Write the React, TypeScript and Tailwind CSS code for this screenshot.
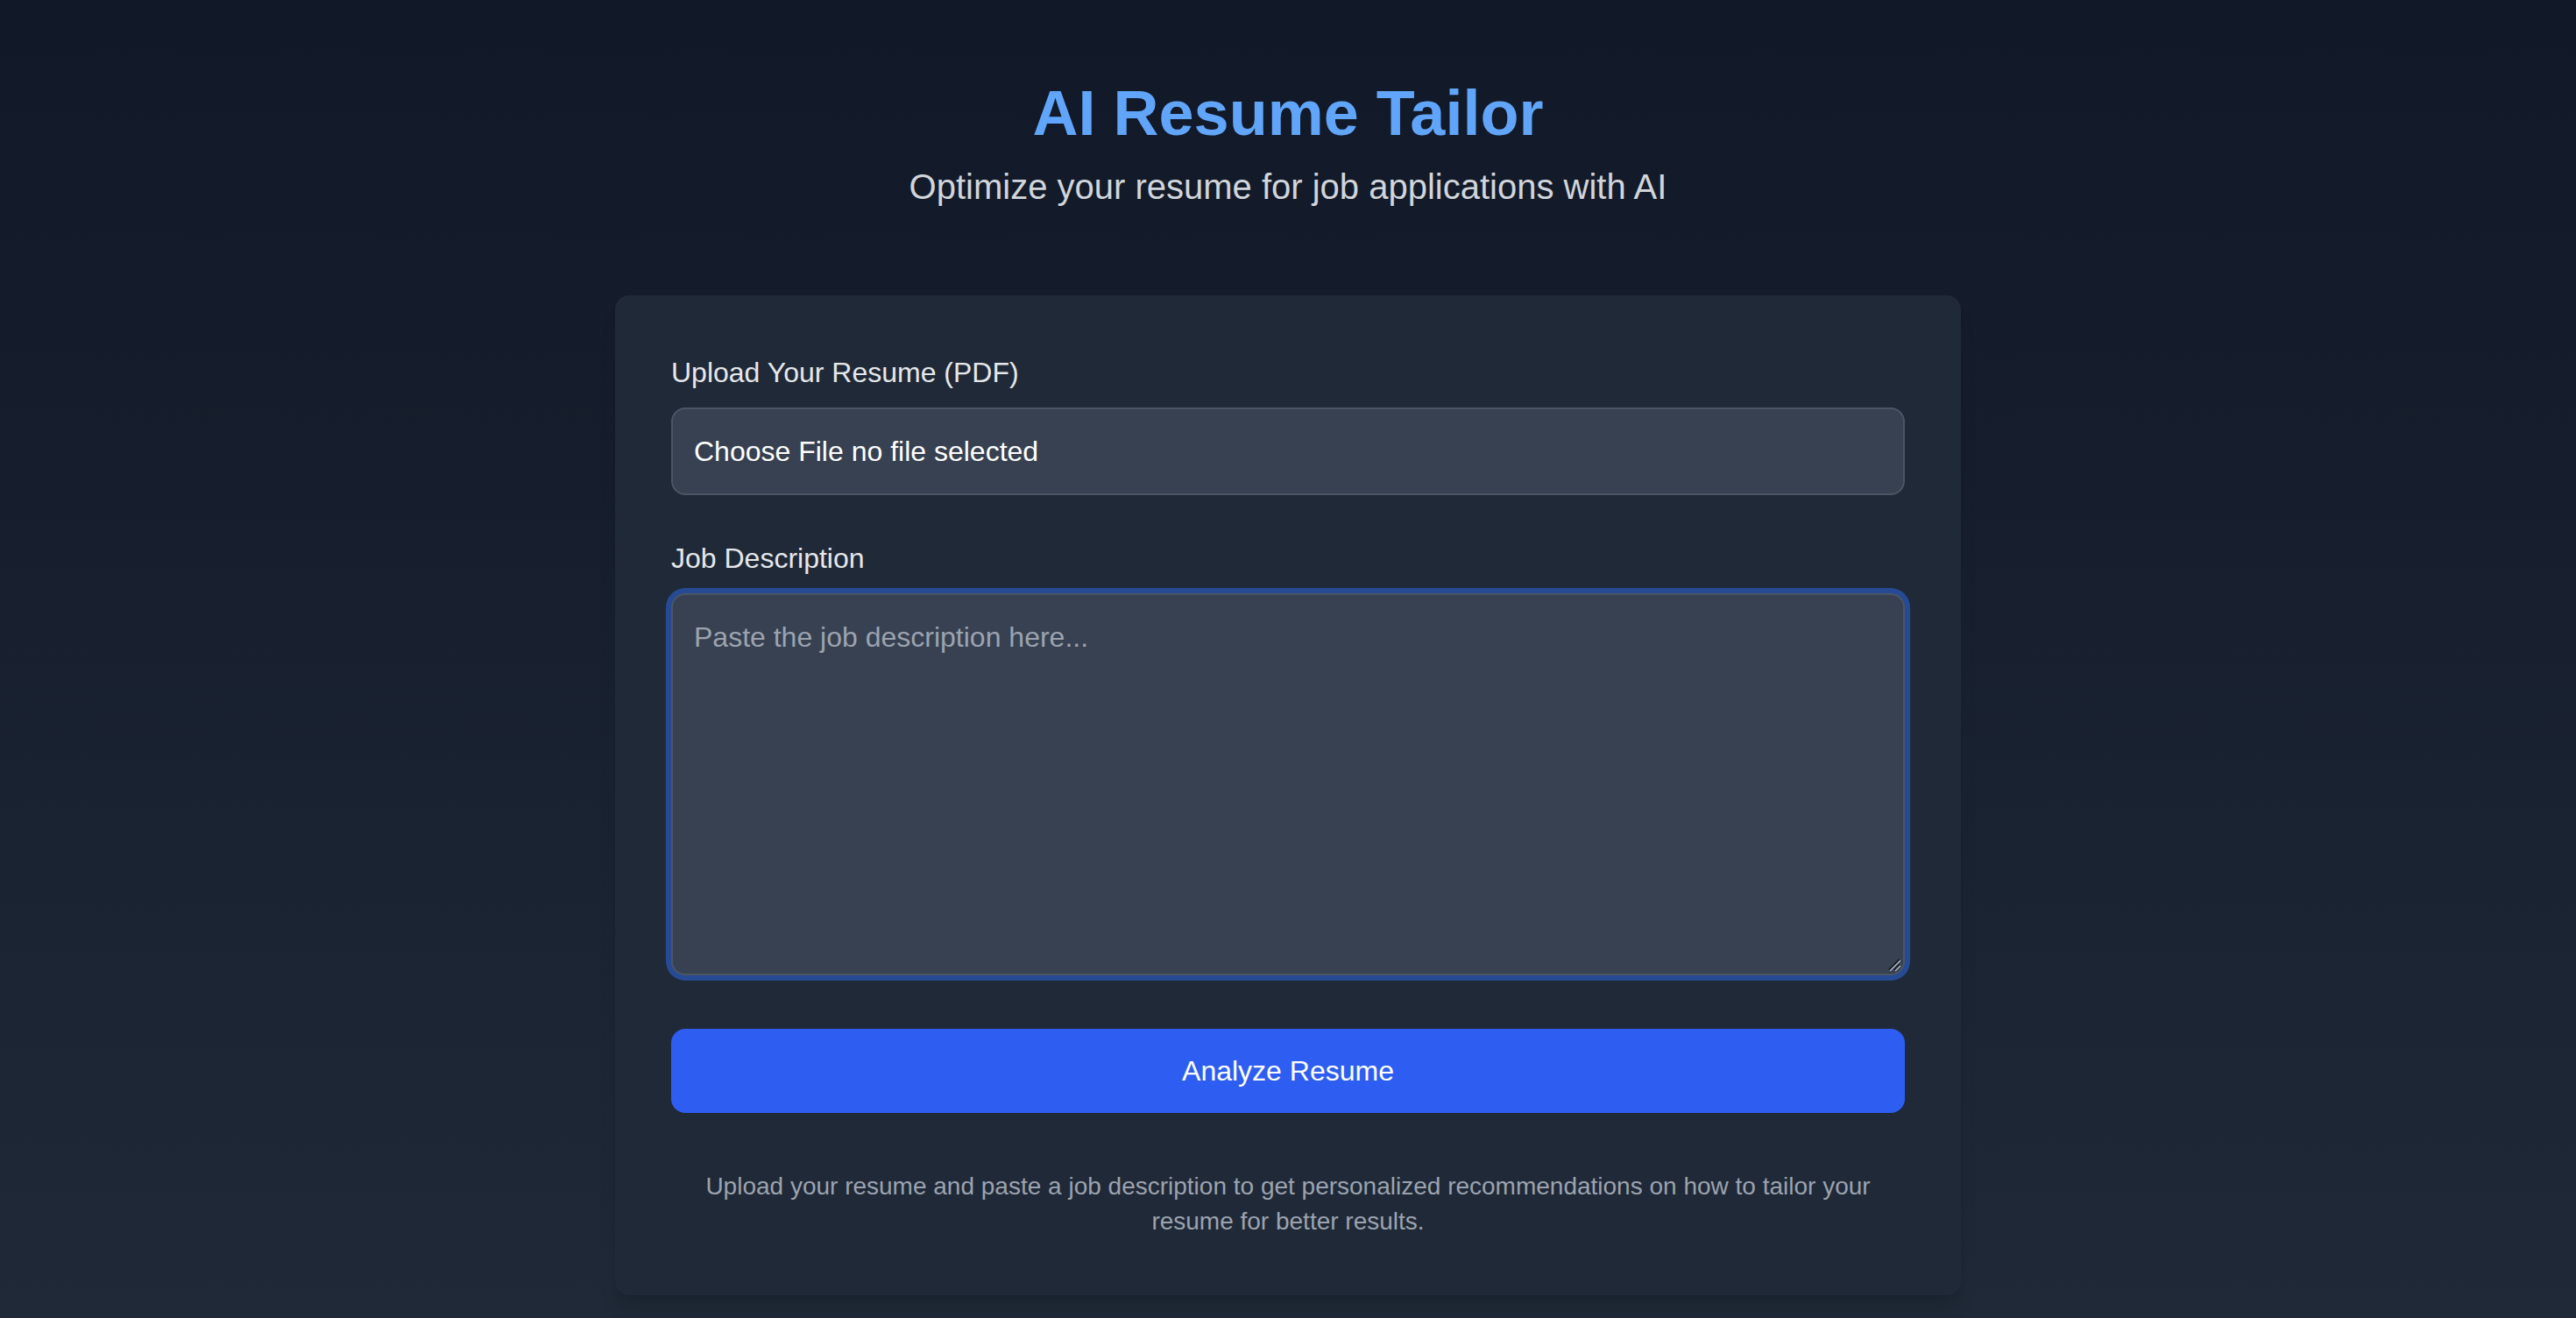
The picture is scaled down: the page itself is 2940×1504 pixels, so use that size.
import { useState } from "react";

const App = () => {
    const [jobText, setJobText] = useState("");

    return (
        <div className="min-h-screen bg-linear-to-b from-[#111827] to-[#1f2937] px-8 pt-[89px] pb-6 font-['Liberation_Sans',Arial,sans-serif]">
            <header className="mb-24 text-center">
                <h1 className="mb-4 text-[72px] leading-[80px] font-bold text-[#60a5fa]">
                    AI Resume Tailor
                </h1>
                <p className="text-[40px] leading-[56px] text-[#d1d5db]">
                    Optimize your resume for job applications with AI
                </p>
            </header>

            <main className="mx-auto w-[1536px] rounded-2xl bg-[#1f2937] p-16 shadow-xl">
                <div className="mb-12">
                    <label className="mb-4 block text-[32px] leading-[48px] text-[#e5e7eb]">
                        Upload Your Resume (PDF)
                    </label>
                    <div className="rounded-2xl border-2 border-[#4b5563] bg-[#374151] px-6 py-6 text-[32px] leading-[48px] text-white">
                        Choose File no file selected
                    </div>
                </div>

                <div className="mb-[61px]">
                    <label className="mb-4 block text-[32px] leading-[48px] text-[#e5e7eb]">
                        Job Description
                    </label>
                    <div className="relative">
                        <textarea
                            value={jobText}
                            onChange={(e) => setJobText(e.target.value)}
                            placeholder="Paste the job description here..."
                            className="block h-[436px] w-full resize-none rounded-2xl border-2 border-[#4b5563] bg-[#374151] px-6 py-6 text-[32px] leading-[48px] text-white ring-[6px] ring-[#274a95] outline-none placeholder:text-[#9ca3af]"
                        />
                        {/* resize grip */}
                        <svg className="pointer-events-none absolute right-[4px] bottom-[4px]" width="16" height="16" viewBox="0 0 16 16">
                            <path d="M2 14 L14 2" stroke="#1a1f2a" strokeWidth="2.5" />
                            <path d="M3 15 L15 3" stroke="#c4c8cf" strokeWidth="1.2" />
                            <path d="M8 14 L14 8" stroke="#1a1f2a" strokeWidth="2.5" />
                            <path d="M9 15 L15 9" stroke="#c4c8cf" strokeWidth="1.2" />
                        </svg>
                    </div>
                </div>

                <button
                    type="button"
                    className="w-full rounded-2xl bg-[#2d5ef1] py-6 text-[32px] leading-[48px] text-white"
                >
                    Analyze Resume
                </button>

                <p className="mt-16 text-center text-[28px] leading-[40px] text-[#9ca3af]">
                    Upload your resume and paste a job description to get personalized recommendations on how to tailor your resume for better results.
                </p>
            </main>
        </div>
    );
};

export default App;
